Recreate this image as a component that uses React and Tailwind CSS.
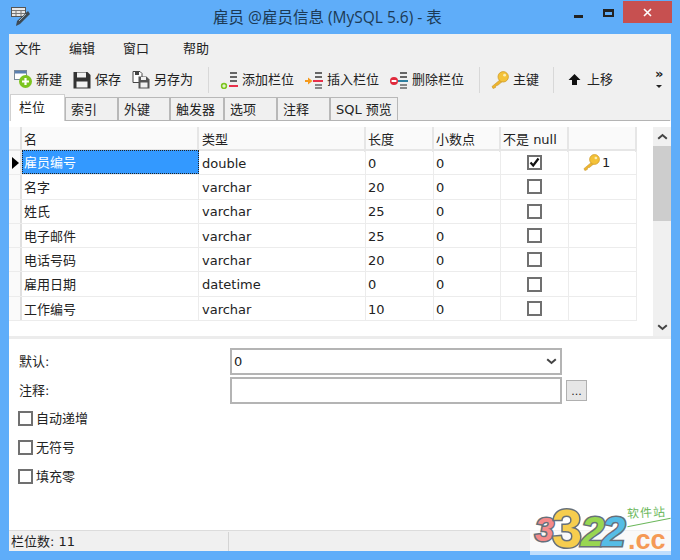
import React from "react";

const fontStack = "font-['Tahoma','DejaVu_Sans','Noto_Sans_CJK_SC',sans-serif]";

const rows = [
  { name: "雇员编号", type: "double", len: "0", dec: "0", notNull: true, key: true },
  { name: "名字", type: "varchar", len: "20", dec: "0" },
  { name: "姓氏", type: "varchar", len: "25", dec: "0" },
  { name: "电子邮件", type: "varchar", len: "25", dec: "0" },
  { name: "电话号码", type: "varchar", len: "20", dec: "0" },
  { name: "雇用日期", type: "datetime", len: "0", dec: "0" },
  { name: "工作编号", type: "varchar", len: "10", dec: "0" },
];

const tabs = [
  { label: "索引", w: "w-[53px]" },
  { label: "外键", w: "w-[52px]" },
  { label: "触发器", w: "w-[54px]" },
  { label: "选项", w: "w-[53px]" },
  { label: "注释", w: "w-[53px]" },
  { label: "SQL 预览", w: "w-[68px]" },
];

const KeyIcon = ({ size = 18 }) => (
  <svg width={size} height={size} viewBox="0 0 18 18">
    <path d="M10 8 L1 15.5 L2 17.5 L4.5 16.5 L5 14.5 L6.8 14.3 L12 10 Z" fill="#eeb52e" stroke="#c8962a" strokeWidth="0.6" />
    <circle cx="12.2" cy="5.8" r="5.2" fill="#f4c238" stroke="#cf9c2a" strokeWidth="0.8" />
    <circle cx="13.6" cy="4.2" r="1.4" fill="#fdeeb4" />
  </svg>
);

const Lines = ({ color, y = 11 }) => (
  <>
    <rect x="10" y="1" width="7" height="2" fill="#666" />
    <rect x="10" y="5" width="7" height="2" fill="#666" />
    <rect x="8" y={y} width="10" height="2" fill={color} />
    <rect x="10" y="13" width="7" height="2" fill="#888" />
    <rect x="10" y="16" width="7" height="2" fill="#888" />
  </>
);

const AddIcon = () => (
  <svg width="18" height="18" viewBox="0 0 18 18">
    <rect x="10" y="1" width="7" height="2" fill="#666" />
    <rect x="10" y="5" width="7" height="2" fill="#666" />
    <rect x="10" y="9" width="7" height="2" fill="#666" />
    <rect x="9" y="14" width="9" height="2" fill="#e8304a" />
    <circle cx="4" cy="15" r="3.2" fill="#7cc520" />
    <path d="M2.2 15h3.6M4 13.2v3.6" stroke="#fff" strokeWidth="1.1" />
  </svg>
);

const InsertIcon = () => (
  <svg width="18" height="18" viewBox="0 0 18 18">
    <Lines color="#e8304a" y={9} />
    <path d="M0 9h3V6.5L7.5 10 3 13.5V11H0Z" fill="#f59a1c" />
  </svg>
);

const DeleteIcon = () => (
  <svg width="18" height="18" viewBox="0 0 18 18">
    <Lines color="#2f7f9f" y={9} />
    <circle cx="4" cy="10" r="4" fill="#e02a3c" />
    <rect x="1.6" y="9" width="4.8" height="2" fill="#fff" />
  </svg>
);

const NewIcon = () => (
  <svg width="19" height="19" viewBox="0 0 19 19">
    <rect x="0.5" y="0.5" width="12" height="9" fill="#fff" stroke="#7a8a9a" />
    <rect x="1" y="1" width="11" height="2.5" fill="#5a7fb0" />
    <circle cx="11.5" cy="11.5" r="6.5" fill="#7cc520" />
    <path d="M8 11.5h7M11.5 8v7" stroke="#fff" strokeWidth="2.2" />
  </svg>
);

const SaveIcon = () => (
  <svg width="18" height="18" viewBox="0 0 18 18">
    <path d="M0.5 1h14l3 3v13.5H0.5Z" fill="#333" />
    <rect x="4" y="1.5" width="9" height="5" fill="#f2f2f2" />
    <rect x="3.5" y="10.5" width="11" height="6" fill="#f2f2f2" />
  </svg>
);

const SaveAsIcon = () => (
  <svg width="18" height="18" viewBox="0 0 18 18">
    <path d="M1 0.5h7l2 2v9H1Z" fill="#fff" stroke="#444" />
    <rect x="3" y="1" width="4" height="3" fill="#444" />
    <path d="M6.5 5.5h8l3 3v9h-11Z" fill="#555" />
    <rect x="9" y="6" width="5" height="3" fill="#f2f2f2" />
    <rect x="8.5" y="11.5" width="7" height="5" fill="#f2f2f2" />
  </svg>
);

const UpIcon = () => (
  <svg width="13" height="13" viewBox="0 0 13 13">
    <path d="M6.5 1 L12.5 7 L9 7 L9 12 L4 12 L4 7 L0.5 7 Z" fill="#111" />
  </svg>
);

const Chevron = () => (
  <svg width="11" height="7" viewBox="0 0 11 7">
    <path d="M1.2 1.2 L5.5 5 L9.8 1.2" fill="none" stroke="#444" strokeWidth="2" />
  </svg>
);

const WindowIcon = () => (
  <svg width="20" height="20" viewBox="0 0 20 20">
    <rect x="0.5" y="0.5" width="14" height="9" fill="#e8e8e8" stroke="#555" />
    <path d="M1 3.5h13M5 4v5M10 4v5M1 6.5h13" stroke="#777" />
    <path d="M17 4 L19 7 L9 17 L5 19 L6 14 Z" fill="#3d4a55" />
    <path d="M15 7 L8 14" stroke="#9fb0bb" />
  </svg>
);

const CheckBox = ({ checked, className = "" }) => (
  <div className={`w-[15px] h-[15px] border-2 border-[#707070] bg-white flex items-center justify-center ${className}`}>
    {checked && (
      <svg width="11" height="11" viewBox="0 0 11 11">
        <path d="M1.5 5.5 L4.2 8.5 L9.5 1.5" fill="none" stroke="#111" strokeWidth="2.2" />
      </svg>
    )}
  </div>
);

const Sep = ({ className }) => <div className={`w-px h-[26px] bg-[#d8d8d8] ${className}`} />;

const gridCols = "grid grid-cols-[13px_177px_167px_68px_67px_68px_68px] w-[628px]";

export default function App() {
  return (
    <div className={`relative w-[680px] h-[560px] overflow-hidden bg-[#5fadf9] flex flex-col text-[13px] text-[#222] ${fontStack}`}>
      {/* title bar */}
      <div className="relative h-[34px] shrink-0">
        <div className="absolute left-[11px] top-[7px]">
          <WindowIcon />
        </div>
        <div className="absolute left-[213px] top-[6px] text-[15.5px] text-[#1c3a55] whitespace-nowrap font-['Open_Sans','Noto_Sans_CJK_SC',sans-serif]">
          雇员 @雇员信息 (MySQL 5.6) - 表
        </div>
        <div className="absolute left-[574px] top-[15px] w-[9px] h-[3px] bg-[#222]" />
        <div className="absolute left-[603px] top-[9px] w-[11px] h-[8px] border-2 border-t-[3px] border-[#222]" />
        <div className="absolute left-[623px] top-[1px] w-[49px] h-[22px] bg-[#c75050] flex items-center justify-center">
          <svg width="9" height="9" viewBox="0 0 9 9">
            <path d="M1 1 L8 8 M8 1 L1 8" stroke="#fff" strokeWidth="1.6" />
          </svg>
        </div>
      </div>

      {/* client area */}
      <div className="ml-[9px] w-[662px] h-[517px] bg-[#f0f0f0] flex flex-col">
        {/* menu */}
        <div className="h-[28px] shrink-0 flex items-center pt-[2px]">
          <span className="ml-[6px]">文件</span>
          <span className="ml-[28px]">编辑</span>
          <span className="ml-[28px]">窗口</span>
          <span className="ml-[34px]">帮助</span>
        </div>

        {/* toolbar */}
        <div className="relative h-[32px] shrink-0 flex items-center pt-[3px]">
          <div className="ml-[5px] w-[18px]"><NewIcon /></div>
          <span className="ml-[4px] w-[27px] whitespace-nowrap">新建</span>
          <div className="ml-[10px] w-[18px]"><SaveIcon /></div>
          <span className="ml-[4px] w-[27px] whitespace-nowrap">保存</span>
          <div className="ml-[10px] w-[18px]"><SaveAsIcon /></div>
          <span className="ml-[4px] w-[40px] whitespace-nowrap">另存为</span>
          <Sep className="ml-[14px]" />
          <div className="ml-[11px] w-[18px]"><AddIcon /></div>
          <span className="ml-[4px] w-[54px] whitespace-nowrap">添加栏位</span>
          <div className="ml-[9px] w-[18px]"><InsertIcon /></div>
          <span className="ml-[4px] w-[54px] whitespace-nowrap">插入栏位</span>
          <div className="ml-[9px] w-[18px]"><DeleteIcon /></div>
          <span className="ml-[4px] w-[54px] whitespace-nowrap">删除栏位</span>
          <Sep className="ml-[13px]" />
          <div className="ml-[11px] w-[18px]"><KeyIcon /></div>
          <span className="ml-[4px] w-[27px] whitespace-nowrap">主键</span>
          <Sep className="ml-[13px]" />
          <div className="ml-[14px] w-[13px]"><UpIcon /></div>
          <span className="ml-[6px] w-[27px] whitespace-nowrap">上移</span>
          <div className="ml-[41px] -mt-[3px] flex flex-col items-center text-[#222]">
            <span className="text-[13px] leading-[12px] font-bold">»</span>
            <span className="mt-[5px] w-0 h-0 border-x-[3px] border-x-transparent border-t-[3px] border-t-[#222]" />
          </div>
        </div>

        {/* tabs */}
        <div className="h-[27px] shrink-0 flex items-end ml-[1px] border-b border-[#b4b4b4] w-[660px]">
          <div className="w-[55px] h-[27px] -mb-px bg-white border border-b-0 border-[#d0d0d0] flex items-center pl-[8px] relative">
            栏位
          </div>
          {tabs.map((t) => (
            <div
              key={t.label}
              className={`${t.w} h-[23px] bg-[#f0f0f0] border border-b-0 border-[#b8b8b8] flex items-center pl-[5px] pt-[2px] whitespace-nowrap`}
            >
              {t.label}
            </div>
          ))}
        </div>

        {/* fields grid */}
        <div className="h-[215px] shrink-0 bg-white pt-[6px] flex">
          <div>
            <div className={`${gridCols} h-[24px] bg-[#fafafa] border-b-2 border-[#e6e6e6]`}>
              <div className="border-r-2 border-[#e0e0e0]" />
              <div className="border-r-2 border-[#e6e6e6] pl-[2px] leading-[25px]">名</div>
              <div className="border-r-2 border-[#e6e6e6] pl-[3px] leading-[25px]">类型</div>
              <div className="border-r-2 border-[#e6e6e6] pl-[2px] leading-[25px]">长度</div>
              <div className="border-r-2 border-[#e6e6e6] pl-[2px] leading-[25px]">小数点</div>
              <div className="border-r-2 border-[#e6e6e6] pl-[2px] leading-[25px] whitespace-nowrap">不是 null</div>
              <div className="border-r-2 border-[#e6e6e6]" />
            </div>
            {rows.map((r, i) => (
              <div key={r.name} className={`${gridCols} h-[24.3px] border-b border-[#ececec] items-stretch`}>
                <div className="bg-[#fafafa] border-r-2 border-[#e0e0e0] flex items-center pl-[3px]">
                  {i === 0 && (
                    <span className="w-0 h-0 border-y-[6px] border-y-transparent border-l-[7px] border-l-black" />
                  )}
                </div>
                {i === 0 ? (
                  <div className="bg-[#3399ff] text-white border border-dotted border-[#222] pl-[1px] pt-[2px] flex items-center -mt-px">
                    {r.name}
                  </div>
                ) : (
                  <div className="border-r border-[#ececec] pl-[2px] pt-[2px] flex items-center">{r.name}</div>
                )}
                <div className="border-r border-[#ececec] pl-[3px] pt-[2px] flex items-center">{r.type}</div>
                <div className="border-r border-[#ececec] pl-[2px] pt-[2px] flex items-center">{r.len}</div>
                <div className="border-r border-[#ececec] pl-[2px] pt-[2px] flex items-center">{r.dec}</div>
                <div className="border-r border-[#ececec] flex items-center justify-center">
                  <CheckBox checked={r.notNull} />
                </div>
                <div className="border-r border-[#ececec] flex items-center pl-[14px] gap-[2px]">
                  {r.key && (
                    <>
                      <KeyIcon size={17} />
                      <span>1</span>
                    </>
                  )}
                </div>
              </div>
            ))}
          </div>
          {/* scrollbar */}
          <div className="ml-[16px] w-[18px] bg-[#f0f0f0] flex flex-col items-center justify-between pt-[6px] pb-[5px] relative">
            <div className="rotate-180 flex"><Chevron /></div>
            <div className="absolute left-0 top-[19px] w-[18px] h-[75px] bg-[#cdcdcd]" />
            <Chevron />
          </div>
        </div>

        {/* splitter */}
        <div className="h-[3px] shrink-0 bg-[#ececec]" />

        {/* field options */}
        <div className="flex-1 bg-white relative pt-[9px]">
          <div className="flex items-center h-[27px]">
            <span className="ml-[10px] w-[211px]">默认:</span>
            <div className="w-[332px] h-[27px] border-2 border-[#b4b4b4] flex items-center justify-between pl-[2px] pr-[3px]">
              <span>0</span>
              <Chevron />
            </div>
          </div>
          <div className="flex items-center h-[27px] mt-[2px]">
            <span className="ml-[10px] w-[211px]">注释:</span>
            <div className="w-[332px] h-[27px] border-2 border-[#b4b4b4]" />
            <div className="ml-[4px] w-[21px] h-[21px] bg-[#e6e6e6] border border-[#b0b0b0] flex items-center justify-center text-[11px] leading-none pt-[2px]">
              ...
            </div>
          </div>
          <div className="flex flex-col gap-[14px] mt-[7px] ml-[9px]">
            {["自动递增", "无符号", "填充零"].map((label) => (
              <div key={label} className="flex items-center gap-[3px] h-[15px]">
                <CheckBox />
                <span>{label}</span>
              </div>
            ))}
          </div>
        </div>

        {/* status bar */}
        <div className="h-[21px] shrink-0 bg-[#f0f0f0] border-t border-[#dcdcdc] flex items-center pt-[1px]">
          <div className="w-[220px] h-full pl-[2px] border-r border-[#d4d4d4] flex items-center">栏位数: 11</div>
        </div>
      </div>

      {/* watermark */}
      <div className="absolute left-[530px] top-[500px] w-[141px] h-[55px] bg-white/60 overflow-hidden">
        <span className="absolute left-[5px] top-[12px] text-[34px] leading-none font-bold italic font-['Liberation_Sans',sans-serif] text-[#f58a8a] [-webkit-text-stroke:3px_#66707a] [paint-order:stroke_fill]">3</span>
        <span className="absolute left-[22px] top-[1px] text-[54px] leading-none font-bold font-['Liberation_Sans',sans-serif] text-[#f6cd4e] [-webkit-text-stroke:3px_#66707a] [paint-order:stroke_fill]">3</span>
        <span className="absolute left-[51px] top-[11px] text-[42px] leading-none font-bold italic font-['Liberation_Sans',sans-serif] text-[#98d651] [-webkit-text-stroke:3px_#66707a] [paint-order:stroke_fill]">2</span>
        <span className="absolute left-[72px] top-[11px] text-[42px] leading-none font-bold italic font-['Liberation_Sans',sans-serif] text-[#55bde6] [-webkit-text-stroke:3px_#66707a] [paint-order:stroke_fill]">2</span>
        <span className="absolute left-[97px] top-[6px] text-[12px] leading-none text-[#6cb85c] -rotate-3 font-['Noto_Sans_CJK_SC',sans-serif] whitespace-nowrap tracking-[1px]">
          软件站
        </span>
        <div className="absolute left-[97px] top-[22px] w-[44px] h-px bg-[#6cb85c] -rotate-[11deg]" />
        <span className="absolute left-[98px] top-[26px] text-[27px] leading-[28px] font-bold text-[#f59a56] font-['Liberation_Sans',sans-serif] whitespace-nowrap">
          .cc
        </span>
      </div>
    </div>
  );
}
